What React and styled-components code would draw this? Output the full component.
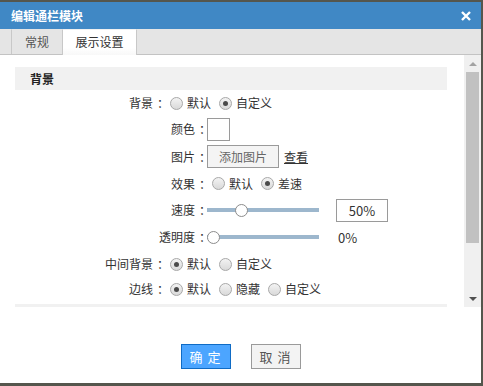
import React from "react";
import styled, { createGlobalStyle } from "styled-components";

const GlobalStyle = createGlobalStyle`
  html, body {
    margin: 0;
    padding: 0;
  }
  body {
    background: #55564d;
    font-family: "Noto Sans CJK SC", "Noto Sans", sans-serif;
    font-size: 12px;
    color: #333;
  }
  * {
    box-sizing: border-box;
  }
`;

const Dialog = styled.div`
  margin-top: 2px;
  width: 481px;
  height: 381px;
  background: #fff;
  display: flex;
  flex-direction: column;
`;

const TitleBar = styled.div`
  height: 27px;
  background: #4088c5;
  display: flex;
  align-items: center;
  justify-content: space-between;
  padding: 0 10px 0 11px;
`;

const Title = styled.span`
  color: #fff;
  font-size: 12px;
  font-weight: bold;
  line-height: 1;
`;

const Close = styled.span`
  display: flex;
  width: 10px;
  height: 10px;
`;

const TabBar = styled.div`
  height: 26px;
  background: #e5e5e5;
  border-bottom: 1px solid #c3c3c3;
  display: flex;
  align-items: flex-end;
  padding-left: 11px;
`;

const Tab = styled.div`
  width: ${(p) => p.$w}px;
  height: ${(p) => (p.$active ? 26 : 25)}px;
  margin-bottom: ${(p) => (p.$active ? -1 : 0)}px;
  display: flex;
  align-items: center;
  justify-content: center;
  font-size: 12px;
  line-height: 1;
  color: ${(p) => (p.$active ? "#333" : "#555")};
  background: ${(p) =>
    p.$active ? "linear-gradient(#ffffff, #ffffff 70%, #f8f8f8)" : "transparent"};
  border-left: 1px solid #c8c8c8;
  border-right: ${(p) => (p.$active ? "1px solid #c8c8c8" : "none")};
  border-top: 1px solid ${(p) => (p.$active ? "#f0f0f0" : "transparent")};
  padding-bottom: ${(p) => (p.$active ? 1 : 0)}px;
`;

const Body = styled.div`
  height: 252px;
  display: flex;
`;

const Scroller = styled.div`
  flex: 1;
  overflow: hidden;
  padding: 12px 17px 0 15px;
`;

const SectionHead = styled.div`
  height: 23px;
  background: #f1f1f1;
  padding-left: 15px;
  display: flex;
  align-items: center;
  font-size: 12px;
  font-weight: bold;
  color: #222;
  line-height: 1;
`;

const Row = styled.div`
  height: ${(p) => p.$h}px;
  display: flex;
  align-items: center;
  line-height: 1;
`;

const Label = styled.span`
  width: ${(p) => p.$w}px;
  text-align: right;
  white-space: nowrap;
  color: #333;
`;

/* full-width colon sits centred in its cell in the original font */
const Colon = styled.span`
  display: inline-block;
  width: 12px;
  padding-left: 4px;
  text-align: left;
  overflow: visible;
`;

const Option = styled.label`
  display: flex;
  align-items: center;
  margin: 0 3px 0 5px;
  color: #333;
`;

const Radio = styled.span`
  width: 13px;
  height: 13px;
  border-radius: 50%;
  border: 1px solid #a8a8a8;
  background: linear-gradient(#f3f3f3, #d9d9d9);
  display: flex;
  align-items: center;
  justify-content: center;
  margin-right: 4px;

  &::after {
    content: "";
    width: 5px;
    height: 5px;
    border-radius: 50%;
    background: ${(p) => (p.$checked ? "#4a4a4a" : "transparent")};
  }
`;

const Swatch = styled.span`
  width: 23px;
  height: 23px;
  border: 1px solid #9a9a9a;
  background: #fff;
`;

const Button = styled.span`
  height: 23px;
  padding: 0 11px;
  display: flex;
  align-items: center;
  background: #f4f4f4;
  border: 1px solid #9a9a9a;
  color: #666;
`;

const Link = styled.span`
  margin-left: 5px;
  text-decoration: underline;
  color: #333;
`;

const Track = styled.div`
  position: relative;
  width: 112px;
  height: 4px;
  background: #9db7cd;
`;

const Thumb = styled.span`
  position: absolute;
  top: 50%;
  left: ${(p) => p.$left}px;
  width: 13px;
  height: 13px;
  margin-top: -6.5px;
  border-radius: 50%;
  background: #fff;
  border: 1px solid #8c8c8c;
`;

const ValueBox = styled.span`
  margin-left: 17px;
  width: 52px;
  height: 23px;
  border: 1px solid #9a9a9a;
  display: flex;
  align-items: center;
  justify-content: center;
  font-size: 13px;
  color: #333;
`;

const ValueText = styled.span`
  margin-left: 19px;
  font-size: 13px;
  color: #333;
`;

const Divider = styled.div`
  margin-top: 4px;
  height: 3px;
  background: #f1f1f1;
`;

const ScrollBar = styled.div`
  width: 17px;
  background: #f0f0f0;
  display: flex;
  flex-direction: column;
`;

const Arrow = styled.div`
  height: 17px;
  display: flex;
  align-items: center;
  justify-content: center;

  &::after {
    content: "";
    border-left: 4px solid transparent;
    border-right: 4px solid transparent;
    ${(p) =>
      p.$up
        ? "border-bottom: 4px solid #a3a3a3;"
        : "border-top: 4px solid #505050;"}
  }
`;

const ScrollThumb = styled.div`
  height: 171px;
  margin: 0 2px;
  background: #c1c1c1;
`;

const Spacer = styled.div`
  flex: 1;
`;

const Footer = styled.div`
  flex: 1;
  display: flex;
  justify-content: center;
  gap: 20px;
  padding-top: 37px;
`;

const ActionButton = styled.span`
  width: 50px;
  height: 25px;
  display: flex;
  align-items: center;
  justify-content: center;
  font-size: 13px;
  letter-spacing: 1px;
  line-height: 1;
  color: ${(p) => (p.$primary ? "#fff" : "#555")};
  background: ${(p) => (p.$primary ? "#4ca5ff" : "#f3f3f3")};
  border: 1px solid ${(p) => (p.$primary ? "#0f6bc5" : "#9a9a9a")};
`;

const Field = ({ w, children }) => (
  <Label $w={w}>
    {children}
    <Colon>：</Colon>
  </Label>
);

const Radios = ({ items, checked }) =>
  items.map((text, i) => (
    <Option key={text}>
      <Radio $checked={i === checked} />
      {text}
    </Option>
  ));

const Slider = ({ offset }) => (
  <Track>
    <Thumb $left={offset} />
  </Track>
);

const WIDE = 150;
const NARROW = 192;

export default function App() {
  return (
    <>
      <GlobalStyle />
      <Dialog>
        <TitleBar>
          <Title>编辑通栏模块</Title>
          <Close>
            <svg width="10" height="10" viewBox="0 0 10 10">
              <path d="M1 1L9 9M9 1L1 9" stroke="#fff" strokeWidth="2.4" />
            </svg>
          </Close>
        </TitleBar>
        <TabBar>
          <Tab $w={51}>常规</Tab>
          <Tab $w={75} $active>
            展示设置
          </Tab>
        </TabBar>
        <Body>
          <Scroller>
            <SectionHead>背景</SectionHead>
            <Row $h={26}>
              <Field w={WIDE}>背景</Field>
              <Radios items={["默认", "自定义"]} checked={1} />
            </Row>
            <Row $h={26}>
              <Field w={NARROW}>颜色</Field>
              <Swatch />
            </Row>
            <Row $h={29}>
              <Field w={NARROW}>图片</Field>
              <Button>添加图片</Button>
              <Link>查看</Link>
            </Row>
            <Row $h={25}>
              <Field w={NARROW}>效果</Field>
              <Radios items={["默认", "差速"]} checked={1} />
            </Row>
            <Row $h={28}>
              <Field w={NARROW}>速度</Field>
              <Slider offset={28} />
              <ValueBox>50%</ValueBox>
            </Row>
            <Row $h={26}>
              <Field w={NARROW}>透明度</Field>
              <Slider offset={0} />
              <ValueText>0%</ValueText>
            </Row>
            <Row $h={28}>
              <Field w={WIDE}>中间背景</Field>
              <Radios items={["默认", "自定义"]} checked={0} />
            </Row>
            <Row $h={22}>
              <Field w={WIDE}>边线</Field>
              <Radios items={["默认", "隐藏", "自定义"]} checked={0} />
            </Row>
            <Divider />
          </Scroller>
          <ScrollBar>
            <Arrow $up />
            <ScrollThumb />
            <Spacer />
            <Arrow />
          </ScrollBar>
        </Body>
        <Footer>
          <ActionButton $primary>确 定</ActionButton>
          <ActionButton>取 消</ActionButton>
        </Footer>
      </Dialog>
    </>
  );
}
